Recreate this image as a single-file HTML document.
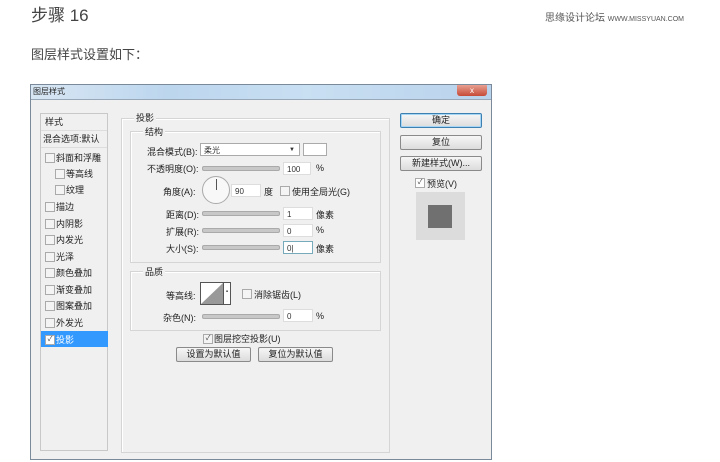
<!DOCTYPE html>
<html><head><meta charset="utf-8"><style>
body{margin:0;width:720px;height:462px;background:#fff;position:relative;overflow:hidden;font-family:"Liberation Sans","Noto Sans CJK SC",sans-serif;color:#333}
.a{position:absolute;white-space:nowrap}
.s{font-size:9px;color:#222}
.box{position:absolute;border:1px solid #d5d5d5;box-shadow:1px 1px 0 #fff inset}
.in{position:absolute;background:#fff;border:1px solid #aaa;height:13px;font-size:8px;line-height:13px;padding-left:3px;box-sizing:border-box;color:#333}
.cb{position:absolute;width:8px;height:8px;border:1px solid #aaa;background:#f4f4f4}
.sl{position:absolute;height:3px;background:#c8c8c8;border:1px solid #aaa;border-radius:2px}
.btn{position:absolute;border:1px solid #8a8a8a;border-radius:2px;background:linear-gradient(#f6f6f6,#dcdcdc);font-size:9px;text-align:center;line-height:13px;color:#222}
</style></head><body>
<div class="a" style="left:31px;top:1px;font-size:17px;color:#444">步骤 16</div>
<div class="a" style="left:545px;top:9px;font-size:10px;color:#555">思缘设计论坛 <span style="font-size:7px">WWW.MISSYUAN.COM</span></div>
<div class="a" style="left:31px;top:44px;font-size:13px;color:#444">图层样式设置如下：</div>

<div style="position:absolute;left:30px;top:84px;width:462px;height:376px;background:#f0f0f0;border:1px solid #7a8a9a;box-sizing:border-box"></div>
<div style="position:absolute;left:31px;top:85px;width:460px;height:14px;background:linear-gradient(90deg,#d8e6f3,#bcd6ee 30%,#c9dff2 60%,#b9d3ec);border-bottom:1px solid #98a8b8"></div>
<div class="a s" style="left:33px;top:86px;font-size:8px">图层样式</div>
<div style="position:absolute;left:457px;top:85px;width:30px;height:11px;background:linear-gradient(#e8a090,#c64a38);border-radius:0 0 3px 3px;color:#fff;font-size:8px;text-align:center;line-height:11px">x</div>

<div style="position:absolute;left:40px;top:113px;width:68px;height:338px;background:#f0f0f0;border:1px solid #c8c8c8;box-sizing:border-box"></div>
<div class="a s" style="left:45px;top:115px">样式</div>
<div style="position:absolute;left:41px;top:130px;width:66px;height:1px;background:#ddd"></div>
<div class="a s" style="left:43px;top:132px">混合选项:默认</div>
<div style="position:absolute;left:41px;top:147px;width:66px;height:1px;background:#ddd"></div>
<div class="cb" style="left:45px;top:153px"></div><div class="a s" style="left:56px;top:151px">斜面和浮雕</div>
<div class="cb" style="left:55px;top:169px"></div><div class="a s" style="left:66px;top:167px">等高线</div>
<div class="cb" style="left:55px;top:185px"></div><div class="a s" style="left:66px;top:183px">纹理</div>
<div class="cb" style="left:45px;top:202px"></div><div class="a s" style="left:56px;top:200px">描边</div>
<div class="cb" style="left:45px;top:219px"></div><div class="a s" style="left:56px;top:217px">内阴影</div>
<div class="cb" style="left:45px;top:235px"></div><div class="a s" style="left:56px;top:233px">内发光</div>
<div class="cb" style="left:45px;top:252px"></div><div class="a s" style="left:56px;top:250px">光泽</div>
<div class="cb" style="left:45px;top:268px"></div><div class="a s" style="left:56px;top:266px">颜色叠加</div>
<div class="cb" style="left:45px;top:285px"></div><div class="a s" style="left:56px;top:283px">渐变叠加</div>
<div class="cb" style="left:45px;top:301px"></div><div class="a s" style="left:56px;top:299px">图案叠加</div>
<div class="cb" style="left:45px;top:318px"></div><div class="a s" style="left:56px;top:316px">外发光</div>
<div style="position:absolute;left:41px;top:331px;width:67px;height:16px;background:#3399ff"></div>
<div class="cb" style="left:45px;top:335px;background:#fff;font-size:7px;line-height:8px;text-align:center">✓</div><div class="a s" style="left:56px;top:333px;color:#fff">投影</div>

<div class="box" style="left:121px;top:118px;width:267px;height:333px"></div>
<div class="a s" style="left:134px;top:111px;background:#f0f0f0;padding:0 2px">投影</div>
<div class="box" style="left:130px;top:131px;width:249px;height:130px"></div>
<div class="a s" style="left:143px;top:125px;background:#f0f0f0;padding:0 2px">结构</div>

<div class="a s" style="left:147px;top:145px">混合模式(B):</div>
<div class="in" style="left:200px;top:143px;width:100px">柔光<span style="position:absolute;right:4px;font-size:6px">▼</span></div>
<div style="position:absolute;left:303px;top:143px;width:24px;height:13px;background:#fff;border:1px solid #aaa;box-sizing:border-box"></div>
<div class="a s" style="left:147px;top:162px">不透明度(O):</div>
<div class="sl" style="left:202px;top:166px;width:76px"></div>
<div class="in" style="left:283px;top:162px;width:28px;border-color:#ddd">100</div><div class="a s" style="left:316px;top:163px">%</div>
<div class="a s" style="left:163px;top:185px">角度(A):</div>
<div style="position:absolute;left:202px;top:176px;width:28px;height:28px;border-radius:50%;border:1px solid #aaa;background:#f8f8f8;box-sizing:border-box"><div style="position:absolute;left:13px;top:2px;width:1px;height:11px;background:#555"></div></div>
<div class="in" style="left:231px;top:184px;width:30px;border-color:#ddd">90</div><div class="a s" style="left:264px;top:185px">度</div>
<div class="cb" style="left:280px;top:186px"></div><div class="a s" style="left:292px;top:185px">使用全局光(G)</div>
<div class="a s" style="left:166px;top:208px">距离(D):</div>
<div class="sl" style="left:202px;top:211px;width:76px"></div>
<div class="in" style="left:283px;top:207px;width:30px;border-color:#ddd">1</div><div class="a s" style="left:316px;top:208px">像素</div>
<div class="a s" style="left:166px;top:225px">扩展(R):</div>
<div class="sl" style="left:202px;top:228px;width:76px"></div>
<div class="in" style="left:283px;top:224px;width:30px;border-color:#ddd">0</div><div class="a s" style="left:316px;top:225px">%</div>
<div class="a s" style="left:166px;top:242px">大小(S):</div>
<div class="sl" style="left:202px;top:245px;width:76px"></div>
<div class="in" style="left:283px;top:241px;width:30px;border-color:#7ab">0|</div><div class="a s" style="left:316px;top:242px">像素</div>

<div class="box" style="left:130px;top:271px;width:249px;height:58px"></div>
<div class="a s" style="left:143px;top:265px;background:#f0f0f0;padding:0 2px">品质</div>
<div class="a s" style="left:166px;top:289px">等高线:</div>
<div style="position:absolute;left:200px;top:282px;width:31px;height:23px;border:1px solid #555;background:#fff;box-sizing:border-box;overflow:hidden"><svg width="24" height="21" style="position:absolute;left:0;top:0"><polygon points="0,21 22,0 22,21" fill="#999"/></svg><div style="position:absolute;right:0;top:0;width:6px;height:21px;border-left:1px solid #555;font-size:6px;line-height:18px;text-align:center">▪</div></div>
<div class="cb" style="left:242px;top:289px"></div><div class="a s" style="left:254px;top:288px">消除锯齿(L)</div>
<div class="a s" style="left:163px;top:311px">杂色(N):</div>
<div class="sl" style="left:202px;top:314px;width:76px"></div>
<div class="in" style="left:283px;top:309px;width:30px;border-color:#ddd">0</div><div class="a s" style="left:316px;top:311px">%</div>

<div class="cb" style="left:203px;top:334px;font-size:7px;line-height:8px;text-align:center">✓</div><div class="a s" style="left:214px;top:332px">图层挖空投影(U)</div>
<div class="btn" style="left:176px;top:347px;width:73px">设置为默认值</div>
<div class="btn" style="left:258px;top:347px;width:73px">复位为默认值</div>

<div class="btn" style="left:400px;top:113px;width:80px;border-color:#3c7fb1;box-shadow:0 0 0 1px #a6d6f5 inset">确定</div>
<div class="btn" style="left:400px;top:135px;width:80px">复位</div>
<div class="btn" style="left:400px;top:156px;width:80px">新建样式(W)...</div>
<div class="cb" style="left:415px;top:178px;background:#fff;font-size:7px;line-height:8px;text-align:center">✓</div><div class="a s" style="left:427px;top:177px">预览(V)</div>
<div style="position:absolute;left:416px;top:192px;width:49px;height:48px;background:#dcdcdc"></div>
<div style="position:absolute;left:428px;top:205px;width:24px;height:23px;background:#707070"></div>
</body></html>
